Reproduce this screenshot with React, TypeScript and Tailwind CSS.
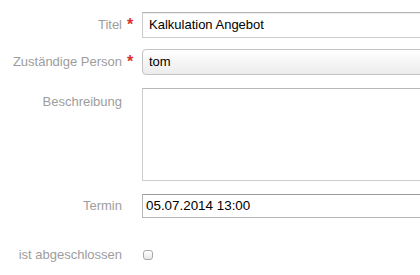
import React from "react";

const font = { fontFamily: '"Liberation Sans", Arial, sans-serif' };

function Label({ children, required }: { children: React.ReactNode; required?: boolean }) {
  return (
    <div className="flex w-[142px] shrink-0 items-center">
      <div className="w-[122px] text-right text-[13px] text-[#9d9d9d]">{children}</div>
      {required ? (
        <div className="w-[20px] pl-[5px] text-[16px] font-bold leading-none text-[#d9302c]">*</div>
      ) : (
        <div className="w-[20px]" />
      )}
    </div>
  );
}

export default function App() {
  return (
    <div className="h-[275px] w-[420px] overflow-hidden bg-white" style={font}>
      <div className="flex flex-col pt-[12px]">
        <div className="flex h-[26px] items-center">
          <Label required>Titel</Label>
          <div className="flex h-[26px] w-[320px] shrink-0 items-center border border-[#cccccc] border-t-[#b5b5b5] pl-[6px] text-[13px] text-black shadow-[inset_0_1px_1px_rgba(0,0,0,0.08)]">
            Kalkulation Angebot
          </div>
        </div>
        <div className="mt-[11px] flex h-[26px] items-center">
          <Label required>Zuständige Person</Label>
          <div className="flex h-[26px] w-[320px] shrink-0 items-center rounded-[4px] border border-[#c3c3c3] bg-gradient-to-b from-white to-[#ececec] pl-[6px] text-[13px] text-black">
            tom
          </div>
        </div>
        <div className="mt-[13px] flex">
          <div className="flex w-[142px] shrink-0 pt-[4px]">
            <div className="w-[122px] text-right text-[13px] text-[#9d9d9d]">Beschreibung</div>
          </div>
          <div className="h-[93px] w-[320px] shrink-0 border border-[#cccccc] border-t-[#b8b8b8]" />
        </div>
        <div className="mt-[13px] flex h-[24px] items-center">
          <Label>Termin</Label>
          <div className="flex h-[24px] w-[320px] shrink-0 items-center border border-[#b5b5b5] border-t-[#9a9a9a] pl-[3px] text-[13.4px] text-black">
            05.07.2014 13:00
          </div>
        </div>
        <div className="mt-[27px] flex h-[20px] items-center">
          <Label>ist abgeschlossen</Label>
          <div className="ml-[1px] h-[10px] w-[10px] rounded-[3px] border border-[#a8a8a8] bg-gradient-to-b from-white to-[#e8e8e8]" />
        </div>
      </div>
    </div>
  );
}
